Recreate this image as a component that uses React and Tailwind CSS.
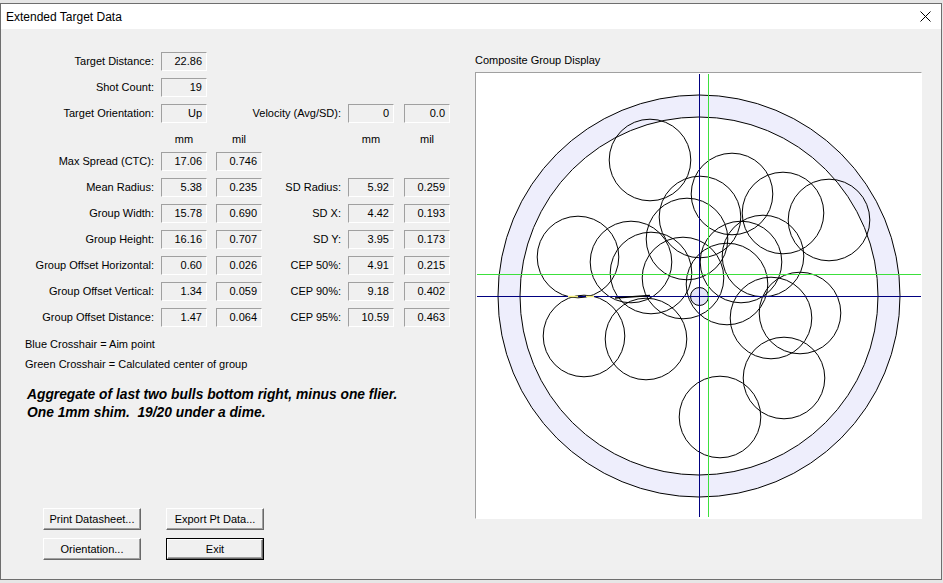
import React from 'react';

const shots = [
  [650, 160], [732, 194], [783, 213], [829, 220], [700, 217], [687, 239],
  [578, 257], [631, 262], [651, 273], [683, 278], [763, 256], [741, 262],
  [727, 284], [771, 318], [800, 313], [584, 336], [646, 339], [720, 417],
  [784, 378],
];

function Field({ value }) {
  return (
    <div className="w-[46px] h-[19px] shrink-0 border border-t-[#a0a0a0] border-l-[#a0a0a0] border-b-white border-r-white text-right pr-[4px] leading-[17px]">
      {value}
    </div>
  );
}

function Row({ label, a, b, rlabel, c, d, header }) {
  const cell = (v) =>
    header ? (
      <div className="w-[46px] shrink-0 text-center">{v}</div>
    ) : v === undefined ? (
      <div className="w-[46px] shrink-0" />
    ) : (
      <Field value={v} />
    );
  return (
    <div className={`flex items-center h-[19px] ${header ? 'mb-[3px]' : 'mb-[7px]'}`}>
      <div className="w-[153px] shrink-0 flex justify-end whitespace-nowrap">{label}</div>
      <div className="ml-[7px]">{cell(a)}</div>
      <div className="ml-[9px]">{cell(b)}</div>
      <div className="w-[79px] shrink-0 flex justify-end whitespace-nowrap">{rlabel}</div>
      <div className="ml-[7px]">{cell(c)}</div>
      <div className="ml-[10px]">{cell(d)}</div>
    </div>
  );
}

function Button({ children, isDefault }) {
  const btn = (
    <button
      type="button"
      className={`${isDefault ? 'w-[96px] h-[20px]' : 'w-[98px] h-[22px]'} bg-[#f0f0f0] border border-t-white border-l-white border-b-[#696969] border-r-[#696969] shadow-[inset_-1px_-1px_0_#a0a0a0] text-[11px] leading-none`}
    >
      {children}
    </button>
  );
  if (isDefault) {
    return <div className="w-[98px] h-[22px] border border-black">{btn}</div>;
  }
  return btn;
}

function GroupDisplay() {
  return (
    <svg width="445" height="445" viewBox="476 73 445 445">
      <circle cx="699" cy="296" r="201" fill="#eeeefc" stroke="#000" strokeWidth="1" />
      <circle cx="699" cy="296" r="179" fill="#ffffff" stroke="#000" strokeWidth="1" />
      <circle cx="699.5" cy="296.5" r="9" fill="#e4e4f8" stroke="#000" strokeWidth="1" />
      {shots.map(([x, y], i) => (
        <circle key={i} cx={x} cy={y} r="40.8" fill="none" stroke="#000" strokeWidth="1" />
      ))}
      <line x1="477" y1="274.5" x2="921" y2="274.5" stroke="#3ce03c" strokeWidth="1" shapeRendering="crispEdges" />
      <line x1="708.5" y1="74" x2="708.5" y2="517" stroke="#3ce03c" strokeWidth="1" shapeRendering="crispEdges" />
      <line x1="477" y1="296.5" x2="921" y2="296.5" stroke="#000080" strokeWidth="1" shapeRendering="crispEdges" />
      <line x1="699.5" y1="74" x2="699.5" y2="517" stroke="#000080" strokeWidth="1" shapeRendering="crispEdges" />
      <line x1="568" y1="296.5" x2="578" y2="296.5" stroke="#f4f080" strokeWidth="1.5" />
      <line x1="586" y1="296.5" x2="594" y2="296.5" stroke="#f4f080" strokeWidth="1.5" />
      <line x1="615" y1="298" x2="650" y2="295.5" stroke="#000" strokeWidth="1.5" />
    </svg>
  );
}

export default function App() {
  return (
    <div className="w-[943px] h-[583px] bg-[#e6e6e6] pt-[3px] overflow-hidden font-['Liberation_Sans',Arial,sans-serif] text-black">
      <div className="w-[942px] h-[577px] border border-[#6e6e6e] bg-[#f0f0f0] flex flex-col">
        {/* Title bar */}
        <div className="h-[25px] bg-white flex items-center justify-between pl-[5px] pr-[10px] shrink-0">
          <span className="text-[12px]">Extended Target Data</span>
          <svg width="11" height="11" viewBox="0 0 11 11">
            <path d="M0.5 0.5 L10.5 10.5 M10.5 0.5 L0.5 10.5" stroke="#000" strokeWidth="1" />
          </svg>
        </div>

        <div className="flex flex-1 text-[11px]">
          {/* Left panel */}
          <div className="w-[474px] shrink-0 flex flex-col pt-[23px]">
            <Row label="Target Distance:" a="22.86" />
            <Row label="Shot Count:" a="19" />
            <Row label="Target Orientation:" a="Up" rlabel="Velocity (Avg/SD):" c="0" d="0.0" />
            <Row header a="mm" b="mil" c="mm" d="mil" />
            <Row label="Max Spread (CTC):" a="17.06" b="0.746" />
            <Row label="Mean Radius:" a="5.38" b="0.235" rlabel="SD Radius:" c="5.92" d="0.259" />
            <Row label="Group Width:" a="15.78" b="0.690" rlabel="SD X:" c="4.42" d="0.193" />
            <Row label="Group Height:" a="16.16" b="0.707" rlabel="SD Y:" c="3.95" d="0.173" />
            <Row label="Group Offset Horizontal:" a="0.60" b="0.026" rlabel="CEP 50%:" c="4.91" d="0.215" />
            <Row label="Group Offset Vertical:" a="1.34" b="0.059" rlabel="CEP 90%:" c="9.18" d="0.402" />
            <Row label="Group Offset Distance:" a="1.47" b="0.064" rlabel="CEP 95%:" c="10.59" d="0.463" />

            <div className="pl-[24px] leading-[20px]">
              <div>Blue Crosshair = Aim point</div>
              <div>Green Crosshair = Calculated center of group</div>
            </div>

            <div className="pl-[26px] mt-[12px] text-[13.8px] leading-[18px] font-bold italic">
              <div>Aggregate of last two bulls bottom right, minus one flier.</div>
              <div className="whitespace-pre">One 1mm shim.  19/20 under a dime.</div>
            </div>

            <div className="mt-auto pb-[19px] pl-[42px] flex flex-col gap-[8px]">
              <div className="flex gap-[25px]">
                <Button>Print Datasheet...</Button>
                <Button>Export Pt Data...</Button>
              </div>
              <div className="flex gap-[25px]">
                <Button>Orientation...</Button>
                <Button isDefault>Exit</Button>
              </div>
            </div>
          </div>

          {/* Right panel */}
          <div className="w-[447px] shrink-0 pt-[24px]">
            <div className="h-[14px] leading-[14px]">Composite Group Display</div>
            <div className="mt-[5px] w-[447px] h-[447px] border border-t-[#a0a0a0] border-l-[#a0a0a0] border-b-white border-r-white bg-white">
              <GroupDisplay />
            </div>
          </div>
        </div>
      </div>
    </div>
  );
}
